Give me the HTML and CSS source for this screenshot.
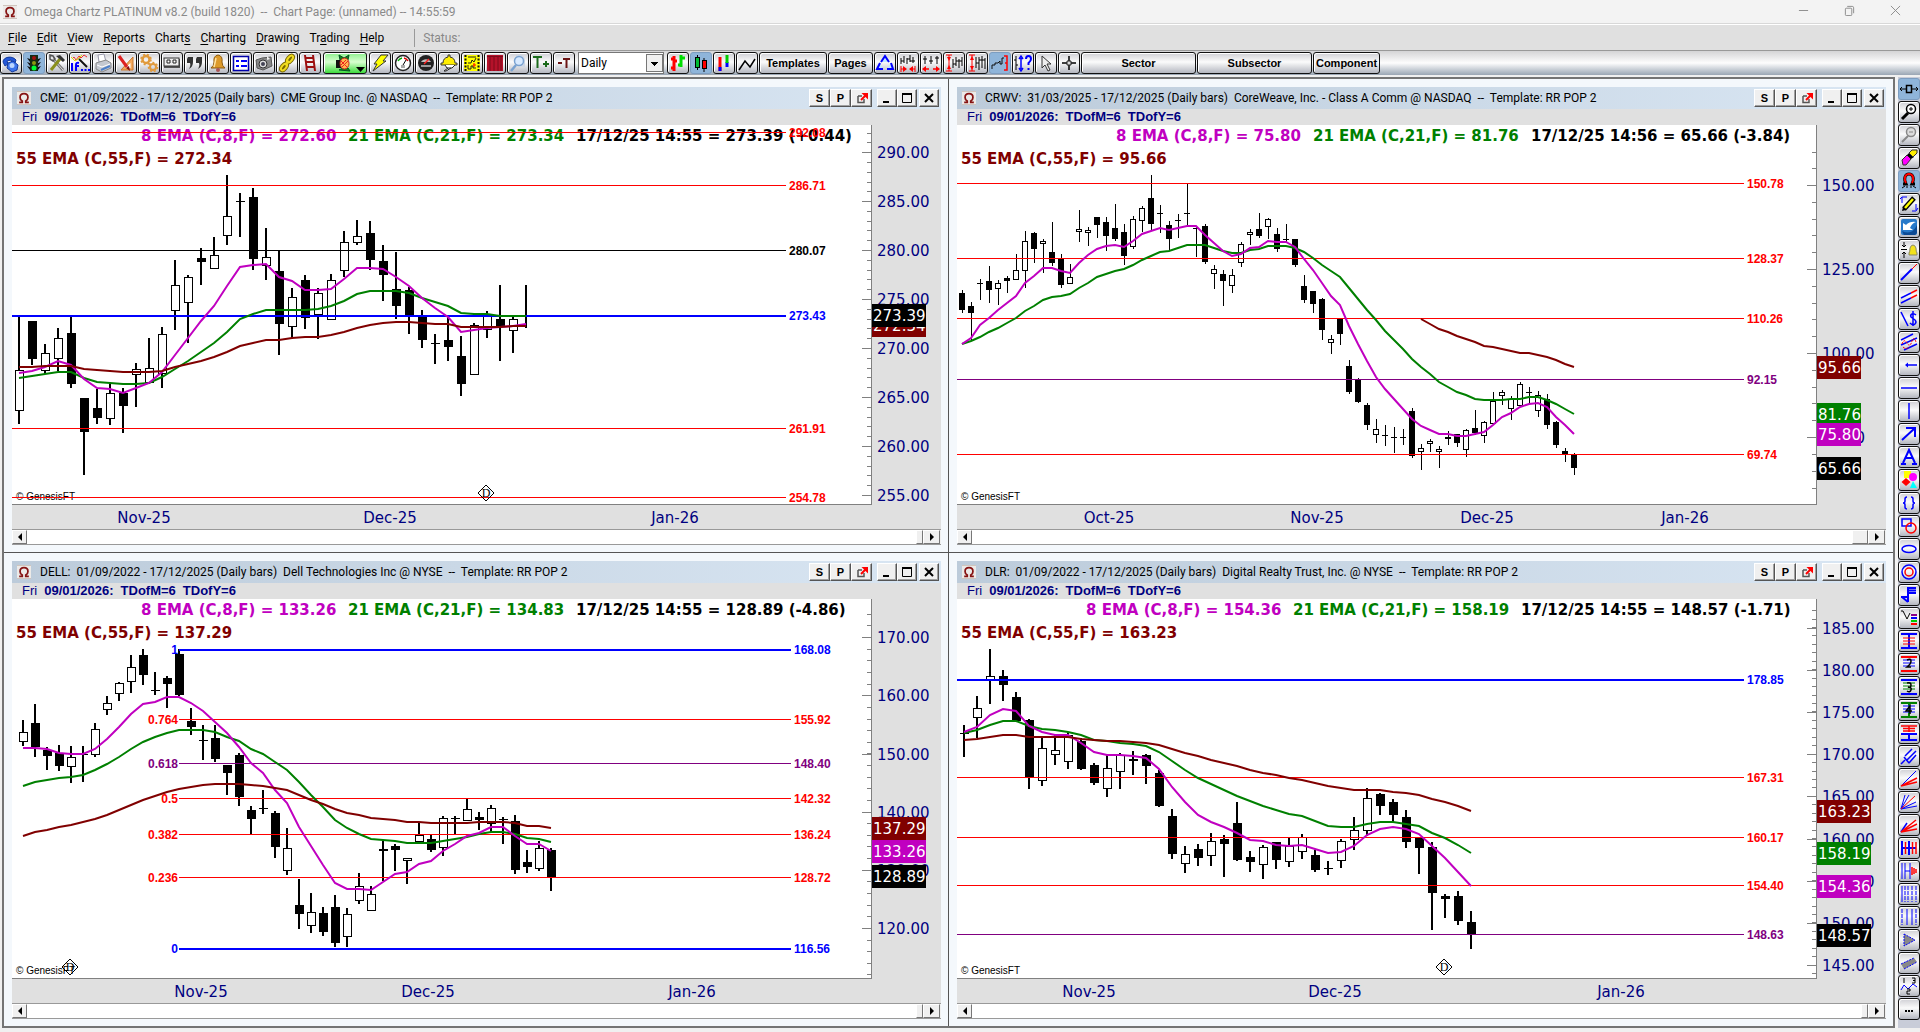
FILE: index.html
```html
<!DOCTYPE html>
<html lang="en">
<head>
<meta charset="utf-8">
<title>Omega Chartz PLATINUM</title>
<link rel="stylesheet" href="styles.css">
</head>
<body>
<svg class="defs" aria-hidden="true">
  <symbol id="omega" viewBox="0 0 16 16"><rect width="16" height="16" fill="#eceae8"/><path d="M0 .5h16M0 15.5h16" stroke="#c9bdb4"/><path d="M2.5 13h3.5v-1.500C4 10.500 3.500 9 3.500 7.300 3.500 4.500 5.400 3 8 3s4.500 1.500 4.500 4.300c0 1.700-.5 3.200-2.500 4.200V13h3.500" fill="none" stroke="#861313" stroke-width="2"/></symbol>
  <symbol id="popout" viewBox="0 0 12 12"><path d="M2 4h4M2 4v6.500h6V7" fill="none" stroke="#555" stroke-width="1.500"/><path d="M5 8l5-5" stroke="red" stroke-width="2"/><path d="M5.500 1H12v6.500z" fill="red"/></symbol>
  <symbol id="minimise" viewBox="0 0 12 12"><path d="M2 10h6" stroke="#000" stroke-width="2"/></symbol>
  <symbol id="maximise" viewBox="0 0 12 12"><path d="M1.500 2v8.500h9V2" fill="none" stroke="#000"/><path d="M1 2h10" stroke="#000" stroke-width="2"/></symbol>
  <symbol id="close" viewBox="0 0 12 12"><path d="M2 2l8 8M10 2l-8 8" stroke="#000" stroke-width="2"/></symbol>
</svg>

<header class="titlebar">
  <svg class="app-icon"><use href="#omega"/></svg>
  <h1>Omega Chartz PLATINUM v8.2 (build 1820) &nbsp;--&nbsp; Chart Page: (unnamed) -- 14:55:59</h1>
  <div class="caption">
    <button aria-label="Minimise"><svg viewBox="0 0 12 12"><path d="M1 6h10"/></svg></button>
    <button aria-label="Restore"><svg viewBox="0 0 12 12"><rect x="1.500" y="3.500" width="7" height="8" rx="1"/><path d="M3.500 1.500h5.500q1.500 0 1.500 1.500v6"/></svg></button>
    <button aria-label="Close"><svg viewBox="0 0 12 12"><path d="M1 1l10 10M11 1L1 11"/></svg></button>
  </div>
</header>

<nav class="menu">
  <a href="#file"><u>F</u>ile</a><a href="#edit"><u>E</u>dit</a><a href="#view"><u>V</u>iew</a><a href="#reports"><u>R</u>eports</a><a href="#charts">Chart<u>s</u></a><a href="#charting"><u>C</u>harting</a><a href="#drawing"><u>D</u>rawing</a><a href="#trading">Tr<u>a</u>ding</a><a href="#help"><u>H</u>elp</a>
  <span class="status">Status:</span>
</nav>

<div class="toolbar">
  <button class="tool" aria-label="Phone"><svg viewBox="0 0 20 20"><path d="M2 9c0-5 9-7 13-2l-1 3-3-1-1-2-4 1 1 3-3 2z" fill="#2458d8" stroke="#123a9c"/><path d="M7 10l5-2 5 4-1 5-5 2-5-4z" fill="#3d74ec" stroke="#123a9c"/><circle cx="11" cy="12.500" r="2.500" fill="#bcd6ff"/></svg></button>
  <button class="tool on" aria-label="Live"><svg viewBox="0 0 20 20"><path d="M7 3h6v14H7zM3 5l3 1v3zM3 9l3 1v3zM3 13l3 1v3zM17 5l-3 1v3zM17 9l-3 1v3zM17 13l-3 1v3z" fill="#111"/><path d="M6 2h8v16H6z" fill="#142b14"/><circle cx="10" cy="5" r="2" fill="#a01010"/><circle cx="10" cy="10" r="2" fill="#8a9a10"/><circle cx="10" cy="15" r="2.500" fill="#0f3"/></svg></button>
  <button class="tool" aria-label="Settings"><svg viewBox="0 0 20 20"><path d="M6 6l10 11" stroke="#777" stroke-width="3"/><path d="M6 6l10 11" stroke="#ddd"/><path d="M13 6L4 17" stroke="#8a8f1c" stroke-width="3"/><path d="M9 3l4-1 5 5-2 2z" fill="#333"/><path d="M3 2v4l3 2 2-2-2-3z" fill="none" stroke="#555" stroke-width="1.500"/></svg></button>
  <button class="tool" aria-label="Conditions"><svg viewBox="0 0 20 20"><path d="M2 6l2-2 2 3 3-4 2 2 3-3 3 2" fill="none" stroke="#e33"/><path d="M1 4l4 4 3-2 4-4" fill="none" stroke="#dd0"/><path d="M9 6l8 8" stroke="#111" stroke-width="2"/><path d="M2 10v8M6 18v-6q0-3 3-2M5 13h4M11 17h2M14.500 17h2M18 17h2" stroke="#00f" stroke-width="2" fill="none"/></svg></button>
  <button class="tool" aria-label="Print"><svg viewBox="0 0 20 20"><path d="M6 9l-1-7 6-1 2 8z" fill="#fff" stroke="#99a"/><path d="M3 10l10-3 5 3v5l-9 4-6-3z" fill="#c4c8d0" stroke="#888"/><path d="M4 12l5 2 8-3" fill="none" stroke="#fff"/><path d="M8 17l9-4" stroke="#4d7fc8" stroke-width="2"/></svg></button>
  <button class="tool" aria-label="Draw"><svg viewBox="0 0 20 20"><path d="M17 4v13H5z" fill="#f4a95c" stroke="#c8772c"/><path d="M14.500 10v5H9z" fill="#fff"/><path d="M3 3l8 11" stroke="#d22" stroke-width="3"/><path d="M10 15l4 3-1-5z" fill="#811"/></svg></button>
  <button class="tool" aria-label="Options"><svg viewBox="0 0 20 20" fill="none" stroke="#e09a3c"><circle cx="7" cy="6.500" r="3.500" stroke-width="2.500"/><circle cx="7" cy="6.500" r="5" stroke-dasharray="2 2" stroke-width="1.500"/><circle cx="14" cy="14" r="3" stroke-width="2"/><circle cx="14" cy="14" r="4.500" stroke-dasharray="2 2" stroke-width="1.500"/></svg></button>
  <button class="tool" aria-label="Tape"><svg viewBox="0 0 20 20"><rect x="2" y="6" width="16" height="9" fill="#555"/><rect x="2" y="5" width="15" height="8" fill="#eee" stroke="#333"/><path d="M5 7h3v3H5zM11 7h3v3h-3z" fill="#fff" stroke="#222"/></svg></button>
  <button class="tool" aria-label="Quotes"><svg viewBox="0 0 20 20"><path d="M3 4h5v5q0 5-4 7 2-4 1-6H2V6zM12 4h5v5q0 5-4 7 2-4 1-6h-3V6z" fill="#333"/></svg></button>
  <button class="tool" aria-label="Alerts"><svg viewBox="0 0 20 20"><path d="M10 2q5 1 4 7 0 4 3 6H3q3-2 3-6-1-6 4-7z" fill="#dd9a2a" stroke="#8c5a10"/><path d="M8 5q-1 5-2 9" stroke="#ffe2a0" stroke-width="1.500" fill="none"/><circle cx="10" cy="17" r="2" fill="#a55"/></svg></button>
  <button class="tool" aria-label="List"><svg viewBox="0 0 20 20"><path d="M2.500 3.500h15v14h-15z" fill="#fff" stroke="#00a" stroke-width="1.500"/><path d="M5 8h3M10 8h6M5 13h3M10 13h6" stroke="#00f" stroke-width="2"/></svg></button>
  <button class="tool" aria-label="Snapshot"><svg viewBox="0 0 20 20"><path d="M2 7l6-2 9-1 1 9-9 4-6-2z" fill="#888" stroke="#555"/><circle cx="9" cy="11" r="4" fill="#ddd" stroke="#333"/><circle cx="9" cy="11" r="2" fill="#445"/><path d="M13 3v4l3-1" fill="#eee"/></svg></button>
  <button class="tool" aria-label="Link"><svg viewBox="0 0 20 20" fill="none"><g stroke="#776600" stroke-width="4"><ellipse cx="13" cy="6" rx="4" ry="2" transform="rotate(-50 13 6)"/><ellipse cx="7" cy="14" rx="4" ry="2" transform="rotate(-50 7 14)"/></g><g stroke="#f0dc20" stroke-width="2"><ellipse cx="13" cy="6" rx="4" ry="2" transform="rotate(-50 13 6)"/><ellipse cx="7" cy="14" rx="4" ry="2" transform="rotate(-50 7 14)"/><path d="M8 12l4-4"/></g></svg></button>
  <button class="tool" aria-label="Ladder"><svg viewBox="0 0 20 20"><path d="M5 2l2 16M13 2l2 16M6 5h8M6 9h8M7 14h8" stroke="#9c0f0f" stroke-width="2" fill="none"/></svg></button>
  <button class="tool run" aria-label="Run"><svg viewBox="0 0 42 20"><path d="M12 7h5v8h-5z" fill="#111"/><path d="M15 2l5 3 5-3-1 5h-8zM15 17l4-2h5l2 3z" fill="#1a7d1a" stroke="#052"/><ellipse cx="20.500" cy="10.500" rx="4.500" ry="5.500" fill="#ffb84d" stroke="#c22"/><path d="M17 8l6 6M17 12l5-5M24 8l-6 6" stroke="#e22"/><path d="M32 14h9l-4.500 5z" fill="#000"/></svg></button>
  <button class="tool" aria-label="Lightning"><svg viewBox="0 0 20 20"><path d="M11 2h7l-5 6h3L3 18l4-7H4z" fill="#ff0" stroke="#333"/></svg></button>
  <button class="tool" aria-label="Gauge"><svg viewBox="0 0 20 20"><circle cx="10" cy="10" r="7.500" fill="#fff" stroke="#222" stroke-width="1.500"/><path d="M5 8a6 6 0 0 1 4-3" stroke="#0a0" stroke-width="1.500" fill="none"/><path d="M11 5a6 6 0 0 1 4 3" stroke="#d00" stroke-width="1.500" fill="none"/><path d="M10 12l3-5" stroke="#000"/><path d="M8 12h4v3H8z" fill="#aaa"/></svg></button>
  <button class="tool" aria-label="Dial"><svg viewBox="0 0 20 20"><circle cx="10" cy="10" r="8" fill="#222"/><path d="M5 9a6 6 0 0 1 10 0z" fill="#bbb"/><path d="M8 11l5-5" stroke="#f22" stroke-width="1.500"/><path d="M5 13h10" stroke="#999" stroke-width="2"/></svg></button>
  <button class="tool" aria-label="Helmet"><svg viewBox="0 0 20 20"><path d="M4 10q0-5 5-6V2h2v2q5 1 5 6h2v2H2v-2z" fill="#fe0" stroke="#333"/><path d="M6 12l2 3h5l3-3M9 15l-4 3h2l5-3" fill="#fff" stroke="#222"/></svg></button>
  <button class="tool" aria-label="Film"><svg viewBox="0 0 20 20"><rect x="2" y="2" width="16" height="16" fill="#ff0"/><path d="M3.500 2v16M16.500 2v16" stroke="#111" stroke-width="2" stroke-dasharray="2 1.500"/><path d="M6 4h8M6 10h3l1-3 2 2 2-4M6 12v4h3v-3h2v2h3" fill="none" stroke="#222"/><path d="M12 14v-4M11 12h3" stroke="red"/></svg></button>
  <button class="tool" aria-label="Curtain"><svg viewBox="0 0 20 20"><path d="M2 2h16v16H2z" fill="#b5122a"/><path d="M5 4v14M9 4v14M13 4v14M16 4v14M2 3.500h16" stroke="#7c0b1a"/></svg></button>
  <button class="tool" aria-label="Find"><svg viewBox="0 0 20 20"><path d="M8 2q8-2 9 5v7q-6 0-9-4z" fill="#ccd6e4"/><circle cx="11" cy="8" r="4.500" fill="#d8eaff" stroke="#7aa2d0" stroke-width="1.500"/><path d="M8 12l-5 6" stroke="#7aa2d0" stroke-width="2.500"/></svg></button>
  <button class="tool" aria-label="Add text"><svg viewBox="0 0 20 20"><path d="M2 4h9M6.500 4v11M12 11h6M15 8v6" stroke="#1c6b1c" stroke-width="2"/></svg></button>
  <button class="tool" aria-label="Remove text"><svg viewBox="0 0 20 20"><path d="M4 10h4M9 6h7M12.500 6v9" stroke="#6b1414" stroke-width="2"/></svg></button>
  <select class="period" aria-label="Bar period"><option>Daily</option><option>Weekly</option></select>
  <button class="tool" aria-label="Bars"><svg viewBox="0 0 20 20"><path d="M6 3v15M3 6h3M3 15h3M6 8h3" stroke="red" stroke-width="3"/><path d="M13 2v12M10 12h3M13 5h4" stroke="#0d0" stroke-width="3"/></svg></button>
  <button class="tool on" aria-label="Candles"><svg viewBox="0 0 20 20"><path d="M6.500 2v15M13 5v14" stroke="#000"/><rect x="4.500" y="4.500" width="4" height="10" fill="#0b3" stroke="#000"/><rect x="11.500" y="7.500" width="4" height="8" fill="red" stroke="#000"/></svg></button>
  <button class="tool" aria-label="Range bars"><svg viewBox="0 0 20 20"><path d="M6 4v14" stroke="red" stroke-width="3"/><path d="M6 14v4M13 9v5" stroke="#00f" stroke-width="3"/><path d="M13 2v8" stroke="#0c0" stroke-width="3"/></svg></button>
  <button class="tool" aria-label="Line"><svg viewBox="0 0 20 20"><path d="M2 17l6-9 5 6 5-8" fill="none" stroke="#000" stroke-width="1.500"/></svg></button>
  <button class="tool wide templates">Templates</button>
  <button class="tool wide pages">Pages</button>
  <button class="tool" aria-label="Recycle"><svg viewBox="0 0 20 20"><path d="M6 9l4-6 4 6M16 10l2 6h-6M8 16H2l3-6" fill="#bfe6ff" stroke="#00f" stroke-width="2"/></svg></button>
  <button class="tool" aria-label="Compress"><svg viewBox="0 0 20 20"><path d="M3 5v6M6 3v7M9 5v6M12 2v7M15 4v6M3 8h3M9 6h3M12 8h5" stroke="#000"/><path d="M3 13v6M17 13v6M3 16h5M17 16h-5" stroke="red"/><path d="M5 13l4 3-4 3zM15 13l-4 3 4 3z" fill="red"/></svg></button>
  <button class="tool" aria-label="Expand"><svg viewBox="0 0 20 20"><path d="M4 3v8M10 3v8M16 3v8M2 6h4M8 8h4M14 5h4" stroke="#000"/><path d="M5 13l-4 3 4 3zM15 13l4 3-4 3z" fill="red"/><path d="M3 16h5M17 16h-5" stroke="red" stroke-width="1.500"/></svg></button>
  <button class="tool" aria-label="Squeeze height"><svg viewBox="0 0 20 20"><path d="M9 6v9M12 4v9M15 6v9M18 4v9M9 11h3M12 8h6" stroke="#000"/><path d="M5 2v16M2 2h6M2 18h6" stroke="red"/><path d="M3 4h4l-2 4zM3 16h4l-2-4z" fill="red"/></svg></button>
  <button class="tool" aria-label="Stretch height"><svg viewBox="0 0 20 20"><path d="M9 4v11M12 4v13M15 3v12M18 5v11M9 10h3M12 7h6" stroke="#000"/><path d="M5 2v16M2 2h6M2 18h6" stroke="red"/><path d="M3 7h4l-2-4zM3 13h4l-2 4z" fill="red"/></svg></button>
  <button class="tool on" aria-label="Auto scale"><svg viewBox="0 0 20 20"><path d="M2 16v-4h3v-2h3l2-2v3h2V5h2" fill="none" stroke="#111"/><path d="M14 3h3v14h-3M15 10h2" fill="none" stroke="red" stroke-width="1.500"/></svg></button>
  <button class="tool" aria-label="Scale help"><svg viewBox="0 0 20 20"><path d="M3 3v14M1 7h2M3 12h2" stroke="#000"/><path d="M8 5v11M6 6l2-3 2 3M6 15l2 3 2-3" stroke="#00f" fill="none" stroke-width="1.500"/><path d="M13 6q0-3 2.500-3T18 6q0 2-2.500 4v2M15.500 15v2" stroke="#00f" stroke-width="2" fill="none"/></svg></button>
  <button class="tool" aria-label="Pointer"><svg viewBox="0 0 20 20"><path d="M6 3v12l3-3 3 6 2-1-3-6h4z" fill="#eee" stroke="#333"/></svg></button>
  <button class="tool" aria-label="Crosshair"><svg viewBox="0 0 20 20"><path d="M10 3v14M3 10h14" stroke="#000" stroke-width="1.500"/><path d="M8 8h4v4H8z" fill="#ddd" stroke="#222"/></svg></button>
  <button class="tool wide sector">Sector</button>
  <button class="tool wide subsector">Subsector</button>
  <button class="tool wide component">Component</button>
</div>

<main class="work">
  <div class="desk">
    <section class="window" data-chart="cme">
      <header class="wtitle"><svg class="app-icon"><use href="#omega"/></svg><h2>CME:&nbsp; 01/09/2022 - 17/12/2025 (Daily bars) &nbsp;CME Group Inc. @ NASDAQ &nbsp;--&nbsp; Template: RR POP 2</h2>
        <div class="wbtns"><button>S</button><button>P</button><button aria-label="Pop out"><svg><use href="#popout"/></svg></button><button class="frame first" aria-label="Minimise"><svg><use href="#minimise"/></svg></button><button class="frame" aria-label="Maximise"><svg><use href="#maximise"/></svg></button><button class="frame last" aria-label="Close"><svg><use href="#close"/></svg></button></div></header>
      <p class="info"><span>Fri</span><b>09/01/2026:</b><b>TDofM=6</b><b>TDofY=6</b></p>
      <svg class="chart" role="img" aria-label="CME daily candles"></svg>
      <div class="scroll"><button class="arrow left" aria-label="Scroll left"></button><span class="track"></span><span class="thumb small"></span><button class="arrow right" aria-label="Scroll right"></button></div>
    </section>
    <section class="window" data-chart="crwv">
      <header class="wtitle"><svg class="app-icon"><use href="#omega"/></svg><h2>CRWV:&nbsp; 31/03/2025 - 17/12/2025 (Daily bars) &nbsp;CoreWeave, Inc. - Class A Comm @ NASDAQ &nbsp;--&nbsp; Template: RR POP 2</h2>
        <div class="wbtns"><button>S</button><button>P</button><button aria-label="Pop out"><svg><use href="#popout"/></svg></button><button class="frame first" aria-label="Minimise"><svg><use href="#minimise"/></svg></button><button class="frame" aria-label="Maximise"><svg><use href="#maximise"/></svg></button><button class="frame last" aria-label="Close"><svg><use href="#close"/></svg></button></div></header>
      <p class="info"><span>Fri</span><b>09/01/2026:</b><b>TDofM=6</b><b>TDofY=6</b></p>
      <svg class="chart" role="img" aria-label="CRWV daily candles"></svg>
      <div class="scroll"><button class="arrow left" aria-label="Scroll left"></button><span class="track"></span><span class="thumb"></span><button class="arrow right" aria-label="Scroll right"></button></div>
    </section>
    <section class="window" data-chart="dell">
      <header class="wtitle"><svg class="app-icon"><use href="#omega"/></svg><h2>DELL:&nbsp; 01/09/2022 - 17/12/2025 (Daily bars) &nbsp;Dell Technologies Inc @ NYSE &nbsp;--&nbsp; Template: RR POP 2</h2>
        <div class="wbtns"><button>S</button><button>P</button><button aria-label="Pop out"><svg><use href="#popout"/></svg></button><button class="frame first" aria-label="Minimise"><svg><use href="#minimise"/></svg></button><button class="frame" aria-label="Maximise"><svg><use href="#maximise"/></svg></button><button class="frame last" aria-label="Close"><svg><use href="#close"/></svg></button></div></header>
      <p class="info"><span>Fri</span><b>09/01/2026:</b><b>TDofM=6</b><b>TDofY=6</b></p>
      <svg class="chart" role="img" aria-label="DELL daily candles"></svg>
      <div class="scroll"><button class="arrow left" aria-label="Scroll left"></button><span class="track"></span><span class="thumb small"></span><button class="arrow right" aria-label="Scroll right"></button></div>
    </section>
    <section class="window" data-chart="dlr">
      <header class="wtitle"><svg class="app-icon"><use href="#omega"/></svg><h2>DLR:&nbsp; 01/09/2022 - 17/12/2025 (Daily bars) &nbsp;Digital Realty Trust, Inc. @ NYSE &nbsp;--&nbsp; Template: RR POP 2</h2>
        <div class="wbtns"><button>S</button><button>P</button><button aria-label="Pop out"><svg><use href="#popout"/></svg></button><button class="frame first" aria-label="Minimise"><svg><use href="#minimise"/></svg></button><button class="frame" aria-label="Maximise"><svg><use href="#maximise"/></svg></button><button class="frame last" aria-label="Close"><svg><use href="#close"/></svg></button></div></header>
      <p class="info"><span>Fri</span><b>09/01/2026:</b><b>TDofM=6</b><b>TDofY=6</b></p>
      <svg class="chart" role="img" aria-label="DLR daily candles"></svg>
      <div class="scroll"><button class="arrow left" aria-label="Scroll left"></button><span class="track"></span><span class="thumb small"></span><button class="arrow right" aria-label="Scroll right"></button></div>
    </section>
  </div>

  <aside class="drawbar" aria-label="Drawing tools">
    <button class="tool on" aria-label="Bar width"><svg viewBox="0 0 20 20"><path d="M1 10h6M13 10h6M3 8l-2 2 2 2M17 8l2 2-2 2" fill="none" stroke="#000"/><rect x="7.500" y="6.500" width="5" height="7" fill="none" stroke="#000" stroke-width="1.500"/></svg></button>
    <button class="tool" aria-label="Zoom in"><svg viewBox="0 0 20 20"><circle cx="12" cy="7" r="4.500" fill="#fff" stroke="#000" stroke-width="1.500"/><path d="M12 5v4M10 7h4" stroke="#000"/><path d="M9 11l-6 6" stroke="#000" stroke-width="3"/></svg></button>
    <button class="tool" aria-label="Zoom out"><svg viewBox="0 0 20 20"><circle cx="12" cy="7" r="4.500" fill="#ddd" stroke="#888" stroke-width="1.500"/><path d="M10 7h4" stroke="#888"/><path d="M9 11l-6 6" stroke="#888" stroke-width="2"/></svg></button>
    <button class="tool" aria-label="Eraser"><svg viewBox="0 0 20 20"><path d="M3 12l5-5 4 4-5 6H4z" fill="#f0f" stroke="#333"/><path d="M8 7l2-2 5 4-3 2z" fill="#000"/><path d="M10 5l3-3h5v3l-4 4z" fill="#fe0" stroke="#333"/></svg></button>
    <button class="tool on" aria-label="Magnet"><svg viewBox="0 0 20 20"><path d="M4 13h3q-2-4-1-7 1-3 4-3t4 3q1 3-1 7h3" fill="none" stroke="#000" stroke-width="3"/><path d="M7 12q-2-3-1-6 1-3 4-3t4 3q1 3-1 6" fill="none" stroke="red" stroke-width="2"/><path d="M3 17l3-2M8 17v-2M12 17v-2M17 17l-3-2" stroke="#000"/></svg></button>
    <button class="tool" aria-label="Edit drawing"><svg viewBox="0 0 20 20"><path d="M5 15L15 4" stroke="#000" stroke-width="5"/><path d="M6 14l8-9" stroke="#ff0" stroke-width="2.500"/><path d="M3 17l1-4 3 3z" fill="#000"/><path d="M3 9V3M1 5l2-2h5M17 10v6M19 14l-2 3h-4" fill="none" stroke="#00f"/></svg></button>
    <button class="tool" aria-label="Undo"><svg viewBox="0 0 20 20"><rect x="2" y="2" width="16" height="16" rx="2" fill="#2779c9"/><path d="M3 14q10 5 15-6v8l-2 2H5z" fill="#0c4a94"/><path d="M4 13V6l3 2q4-4 10-3-4 1-6 6l3 2z" fill="#fff"/></svg></button>
    <button class="tool" aria-label="Price alert"><svg viewBox="0 0 20 20"><path d="M5 2v5M3 5l2 2 2-2M5 18v-6M3 14l2-2 2 2M2 9.500h6" fill="none" stroke="#000"/><path d="M10 13q1-1 1-5 1-3 3-3t3 3q0 4 1 5v2h-8z" fill="#f2e21c" stroke="#886"/></svg></button>
    <button class="tool" aria-label="Trend line"><svg viewBox="0 0 20 20"><path d="M2 17L13 6" stroke="#00f" stroke-width="2"/><path d="M13 6l5-5" stroke="red"/></svg></button>
    <button class="tool" aria-label="Parallel lines"><svg viewBox="0 0 20 20"><path d="M2 12l10-5M2 17l10-5" stroke="#00f" stroke-width="1.500"/><path d="M12 7l6-3M12 12l6-3" stroke="red" stroke-width="1.500"/></svg></button>
    <button class="tool" aria-label="Dollar line"><svg viewBox="0 0 20 20"><path d="M2 3l7 14" stroke="#00f" stroke-width="1.500"/><path d="M17 6q-2-2-4-1t-1 3l4 3q2 2 0 4t-5-1M14 2v15" fill="none" stroke="#00f" stroke-width="1.500"/></svg></button>
    <button class="tool" aria-label="Channel"><svg viewBox="0 0 20 20"><path d="M2 8l12-6M2 13l16-7M5 18l13-6" stroke="#00f" stroke-width="1.500"/><path d="M3 12q2-6 5-1t5-2q2-5 4 1M4 15q3 3 6 0" stroke="red" fill="none" stroke-dasharray="2 1"/></svg></button>
    <button class="tool" aria-label="Ray"><svg viewBox="0 0 20 20"><path d="M7 10h11" stroke="#00f" stroke-width="1.500"/><path d="M6 10l3-2.500v5z" fill="#00f"/></svg></button>
    <button class="tool" aria-label="Horizontal line"><svg viewBox="0 0 20 20"><path d="M2 10h16" stroke="#00f" stroke-width="1.500"/></svg></button>
    <button class="tool" aria-label="Vertical line"><svg viewBox="0 0 20 20"><path d="M10 2v16" stroke="#00f" stroke-width="1.500"/></svg></button>
    <button class="tool" aria-label="Arrow"><svg viewBox="0 0 20 20"><path d="M3 16L16 4M7 4h9v9" fill="none" stroke="#00f" stroke-width="2"/></svg></button>
    <button class="tool" aria-label="Text"><svg viewBox="0 0 20 20"><path d="M4 16L10 3l6 13M6 11h8M2 17h5M13 17h5" fill="none" stroke="#00f" stroke-width="2"/></svg></button>
    <button class="tool" aria-label="Shapes"><svg viewBox="0 0 20 20"><path d="M5 1h7v7H5z" fill="#ff0"/><circle cx="14" cy="7" r="4" fill="#f0f"/><path d="M7 8l4.500 4L7 16l-4.500-4z" fill="red"/><path d="M14 11l4 7h-7z" fill="#0ff"/></svg></button>
    <button class="tool" aria-label="Braces"><svg viewBox="0 0 20 20"><path d="M8 4q-2 0-2 2v2q0 2-2 2 2 0 2 2v2q0 2 2 2M12 4q2 0 2 2v2q0 2 2 2-2 0-2 2v2q0 2-2 2" fill="none" stroke="#00f" stroke-width="1.500"/></svg></button>
    <button class="tool" aria-label="Rectangle"><svg viewBox="0 0 20 20"><path d="M3 3h9v7H3z" fill="none" stroke="#00f" stroke-width="1.500"/><circle cx="12" cy="12" r="5" fill="none" stroke="red" stroke-width="1.500"/></svg></button>
    <button class="tool" aria-label="Ellipse"><svg viewBox="0 0 20 20"><ellipse cx="10" cy="10" rx="7" ry="3.500" fill="none" stroke="#00f" stroke-width="1.500"/></svg></button>
    <button class="tool" aria-label="Circles"><svg viewBox="0 0 20 20"><circle cx="10" cy="10" r="7" fill="none" stroke="#00f" stroke-width="1.500"/><circle cx="10" cy="10" r="4" fill="none" stroke="red" stroke-width="1.500"/></svg></button>
    <button class="tool" aria-label="Gann steps"><svg viewBox="0 0 20 20"><path d="M9 17V3h8M10 5.500h7M10 8h7M2 12h7M3 12l6 5" fill="none" stroke="#00f" stroke-width="2"/></svg></button>
    <button class="tool" aria-label="Volume profile"><svg viewBox="0 0 20 20"><path d="M2 3h2l4 8 3-6" fill="none" stroke="#000"/><path d="M12 7h6" stroke="#808" stroke-width="2"/><path d="M12 10h6" stroke="#00f" stroke-width="2"/><path d="M12 13h6" stroke="#0c0" stroke-width="2"/><path d="M12 16h6" stroke="red" stroke-width="2"/></svg></button>
    <button class="tool" aria-label="Retracement 1"><svg viewBox="0 0 20 20"><path d="M2 3h16M2 17h16M10 3v14" stroke="#00f" stroke-width="2"/><path d="M4 7h12M4 10h12M4 13h12" stroke="red"/></svg></button>
    <button class="tool" aria-label="Retracement 2"><svg viewBox="0 0 20 20"><path d="M2 3h16M2 17h16" stroke="red" stroke-width="2"/><path d="M4 6h12M4 9h12M4 12h12" stroke="#00f"/><path d="M8 6q4-2 4 1t-4 6h4" stroke="#000" fill="none" stroke-width="1.500"/></svg></button>
    <button class="tool" aria-label="Retracement 3"><svg viewBox="0 0 20 20"><path d="M2 3h16M2 17h16" stroke="#00f" stroke-width="2"/><path d="M4 6h12M4 9h12M4 12h12" stroke="green"/><path d="M8 6q4-1 4 2t-3 2q4 0 3 3t-4 1" stroke="#000" fill="none" stroke-width="1.500"/></svg></button>
    <button class="tool" aria-label="Retracement 4"><svg viewBox="0 0 20 20"><path d="M2 3h16M2 17h16M10 3v14" stroke="green" stroke-width="2"/><path d="M4 6h12M4 9h12M4 12h12" stroke="#00f"/><path d="M11 14V6l-4 5h6" stroke="#000" fill="none" stroke-width="1.500"/></svg></button>
    <button class="tool" aria-label="Extension"><svg viewBox="0 0 20 20"><path d="M2 3h16M4 5.500h12M4 8h12M10 3v6" stroke="red" stroke-width="1.500"/><path d="M2 11h16M2 17h16M10 11v6" stroke="#00f" stroke-width="2"/></svg></button>
    <button class="tool" aria-label="Pitchfork"><svg viewBox="0 0 20 20"><path d="M2 18l4-4M6 10l7-7M8 14l9-9M10 17l7-8M5 11l5 6" fill="none" stroke="#00f" stroke-width="1.500"/></svg></button>
    <button class="tool" aria-label="Fan 1"><svg viewBox="0 0 20 20"><path d="M2 17L17 2" stroke="#00f"/><path d="M2 17l16-8M2 17l16-4" stroke="red" stroke-width="1.500"/></svg></button>
    <button class="tool" aria-label="Fan 2"><svg viewBox="0 0 20 20"><path d="M2 17L6 3M2 17l8-14M2 17l15-7M2 17l16-3" stroke="#00f"/><path d="M2 17L16 4" stroke="red"/></svg></button>
    <button class="tool" aria-label="Fan 3"><svg viewBox="0 0 20 20"><path d="M2 17l6-9" stroke="#00f" stroke-width="1.500"/><path d="M2 17L17 5M2 17l16-8M2 17l16-3" stroke="red" stroke-width="1.500"/></svg></button>
    <button class="tool" aria-label="Cycle lines"><svg viewBox="0 0 20 20"><path d="M3 3v14M10 3v14M3 10h14" stroke="#00f" stroke-width="2"/><path d="M6.500 4v12M13.500 4v12M17 4v12" stroke="red" stroke-width="1.500"/></svg></button>
    <button class="tool" aria-label="Time zones"><svg viewBox="0 0 20 20"><path d="M3 2v16M6 2v16M11 2v16M6 10h5" stroke="#00f"/><path d="M13 6v8M15 7v6M17 8v4" stroke="red" stroke-width="1.500"/></svg></button>
    <button class="tool" aria-label="Time bands"><svg viewBox="0 0 20 20"><path d="M3 2v16" stroke="#00f"/><path d="M6 2v16M9 2v16M13 2v16M17 2v16" stroke="#00f" stroke-dasharray="4 1"/></svg></button>
    <button class="tool" aria-label="Session lines"><svg viewBox="0 0 20 20"><path d="M8 2v16M13 2v16" stroke="#00f"/><path d="M3 2v16M17 2v16" stroke="#00f" stroke-dasharray="4 1"/></svg></button>
    <button class="tool" aria-label="Triangle"><svg viewBox="0 0 20 20"><path d="M5 4l11 6-11 6z" fill="#888"/><path d="M5 4l11 6-11 6z" fill="none" stroke="#00f" stroke-dasharray="2 1"/></svg></button>
    <button class="tool" aria-label="Band"><svg viewBox="0 0 20 20"><path d="M2 11l13-6 3 4-13 7z" fill="#888"/><path d="M2 11l13-6M5 16l13-7" stroke="#00f" stroke-dasharray="2 1"/></svg></button>
    <button class="tool" aria-label="Wave count"><svg viewBox="0 0 20 20"><path d="M2 14l3-5 4 4 5-5 4 3" fill="none" stroke="#00f"/><path d="M5 2v5M13 2h3v5h-3M14 4.500h2M8 13h3v2H8v3h3" fill="none" stroke="#000"/></svg></button>
    <button class="tool" aria-label="More"><svg viewBox="0 0 20 20"><path d="M6 12h2M9 12h2M12 12h2" stroke="#000" stroke-width="2"/></svg></button>
  </aside>
</main>
<script src="charts.js"></script>
</body>
</html>
```
FILE: styles.css
```css
* { box-sizing: border-box; }

body {
  margin: 0;
  min-height: 100vh;
  display: flex;
  flex-direction: column;
  background: #f0f0f0;
  font-family: Roboto, "Segoe UI", sans-serif;
  font-size: 12px;
  color: #000;
}

h1, h2, p { margin: 0; font-size: 12px; font-weight: normal; }
button { font: inherit; padding: 0; color: inherit; }
.defs { display: none; }
.app-icon { width: 14px; height: 14px; flex: none; }

/* application title */
.titlebar {
  display: flex;
  align-items: center;
  gap: 7px;
  height: 24px;
  padding-left: 3px;
  background: #f3f3f3;
  border-bottom: 1px solid #d8d8d8;
  color: #8a8a8a;
}
.titlebar h1 { flex: 1; }
.caption { display: flex; padding-right: 2px; }
.caption button {
  width: 46px;
  height: 22px;
  border: 0;
  background: none;
}
.caption svg { width: 11px; height: 11px; fill: none; stroke: #888; }

/* menu */
.menu {
  display: flex;
  align-items: center;
  gap: 10px;
  height: 27px;
  padding-left: 8px;
  background: #e0e0e0;
  border-top: 1px solid #fff;
  border-bottom: 1px solid #999;
}
.menu a { color: #000; text-decoration: none; }
.menu u { text-underline-offset: 2px; }
.status {
  margin-left: 20px;
  padding-left: 8px;
  line-height: 18px;
  border-left: 1px solid #999;
  color: #888;
}

/* toolbars */
.toolbar {
  display: flex;
  align-items: center;
  gap: 1px;
  height: 24px;
  background: linear-gradient(#d4d4d6, #fdfdfd 50%, #9aa6b4);
}
.tool {
  flex: none;
  width: 22px;
  height: 22px;
  border: 1px solid #111;
  border-radius: 3px;
  background: linear-gradient(#cfcfd4, #fbfbfb 45%, #b4b7c0);
  box-shadow: inset 1px 1px 0 #fff;
}
.tool svg { display: block; width: 100%; height: 20px; }
.tool.on { background: #8fb5da; border-color: #7d9dc0; box-shadow: none; }
.tool.run {
  width: 44px;
  margin: 0 1px;
  background: linear-gradient(#8df08d, #d8ffd0 45%, #3ddc3d);
}
.tool.wide { font-family: "Liberation Sans", Arial, sans-serif; font-weight: bold; font-size: 11px; }
.templates { width: 68px; }
.pages { width: 45px; }
.sector { width: 115px; }
.subsector { width: 115px; }
.component { width: 67px; }
.period {
  width: 86px;
  height: 22px;
  margin: 0 2px;
  padding-left: 2px;
  border: 1px solid #777;
  border-radius: 0;
  appearance: none;
  font: inherit;
  color: #000;
  background:
    linear-gradient(#000, #000) right 5px top 9px / 7px 1px no-repeat,
    linear-gradient(#000, #000) right 6px top 10px / 5px 1px no-repeat,
    linear-gradient(#000, #000) right 7px top 11px / 3px 1px no-repeat,
    linear-gradient(#000, #000) right 8px top 12px / 1px 1px no-repeat,
    linear-gradient(#f0f0f0, #f0f0f0) right 1px top 2px / 15px 16px no-repeat,
    linear-gradient(#777, #777) right 0 top 1px / 17px 18px no-repeat,
    #fff;
}

/* workspace */
.work { flex: 1; display: flex; padding: 2px 0 4px 2px; }
.desk {
  flex: 1;
  display: grid;
  grid-template-columns: 1fr 1fr;
  grid-template-rows: 1fr 1fr;
  gap: 1px;
  border: 2px solid #747474;
  background: #555;
}
.drawbar {
  flex: none;
  width: 25px;
  display: flex;
  flex-direction: column;
  gap: 1px;
  padding: 1px 0 0 3px;
  background: linear-gradient(90deg, #f4f4f4 3px, #c8ccd8 3px);
}

/* chart windows */
.window {
  display: flex;
  flex-direction: column;
  min-width: 0;
  min-height: 300px;
  padding: 8px 7px 7px 8px;
  background: #f4f8fc;
}
.wtitle {
  display: flex;
  align-items: center;
  gap: 9px;
  height: 22px;
  padding: 0 2px 0 5px;
  background: linear-gradient(90deg, #bccbda, #d9e6f3);
}
.wtitle h2 { flex: 1; white-space: nowrap; overflow: hidden; }
.wbtns { display: flex; }
.wbtns button {
  display: grid;
  place-items: center;
  width: 21px;
  height: 18px;
  border: 1px solid;
  border-color: #fff #555 #555 #fff;
  background: #f0f0f0;
  box-shadow: inset -1px -1px 0 #a0a0a0;
  font-family: "Liberation Sans", Arial, sans-serif;
  font-size: 11px;
  font-weight: bold;
}
.wbtns svg { width: 12px; height: 12px; }
.wbtns .frame { width: 20px; }
.wbtns .first { margin-left: 5px; }
.wbtns .last { margin-left: 2px; }
.info {
  display: flex;
  gap: 7px;
  height: 16px;
  padding-left: 10px;
  font-size: 13px;
  line-height: 16px;
  background: #e0e0e0;
  color: #000080;
  font-family: "Liberation Sans", Arial, sans-serif;
}
.chart {
  flex: 1;
  display: block;
  width: 100%;
  height: 0;
  background: #e0e0e0;
  font-family: "DejaVu Sans", Verdana, sans-serif;
  font-size: 15px;
}
.legend { font-weight: bold; }
.level { font-family: "Liberation Sans", Arial, sans-serif; font-size: 12px; font-weight: bold; }
.credit { font-family: "Liberation Sans", Arial, sans-serif; font-size: 10px; }
.dividend { font-family: "Liberation Serif", serif; font-size: 12px; }
.axis { fill: #000080; }
.tag { fill: #fff; }

/* scrollbars */
.scroll {
  display: flex;
  height: 16px;
  padding-right: 1px;
  border: 1px solid #999;
  border-width: 1px 0;
  background: #f0f0f0;
}
.track { flex: 1; background: #fff; }
.arrow, .thumb {
  width: 16px;
  border: 1px solid;
  border-color: #fff #777 #777 #fff;
  background: #f0f0f0;
}
.thumb.small { width: 7px; }
.arrow { display: grid; place-items: center; width: 17px; }
.arrow.left { width: 15px; }
.arrow::before { content: ""; border: 4px solid transparent; border-left: 4px solid #000; border-right: 0; }
.arrow.left::before { border-left: 0; border-right: 4px solid #000; }
```
FILE: charts.js
```js
// All chart geometry is in grid units, three to a pixel at the base plot size.
const BASE_W = 860, BASE_H = 379, AXIS_W = 69, AXIS_H = 25;
const RED = '#ff0000', BLUE = '#0000ff', PURPLE = '#800080';
const MAGENTA = '#c000c0', GREEN = '#008000', MAROON = '#800000';

// candles: high, low, body top, body bottom, 1 = filled / 0 = hollow
const charts = {
  cme: {
    ox: 36, oy: 45, x0: 57, step: 39, half: 4, wick: 2,
    legend: [[425, '8 EMA (C,8,F) = 272.60', MAGENTA], [1046, '21 EMA (C,21,F) = 273.34', GREEN], [1728, '17/12/25 14:55 = 273.39 (+0.44)', '#000']],
    legend2: '55 EMA (C,55,F) = 272.34',
    levels: [[68, '292.08', RED], [227, '286.71', RED], [421, '280.07', '#000'], [615, '273.43', BLUE, 2], [955, '261.91', RED], [1162, '254.78', RED]],
    levelEnd: 2358, levelText: 2368,
    axis: { first: 128, step: 147, labels: ['290.00', '285.00', '280.00', '275.00', '270.00', '265.00', '260.00', '255.00'], from: 69 },
    tags: [[612, '272.34', MAROON], [582, '273.39', '#000']],
    months: [[432, 'Nov-25'], [1172, 'Dec-25'], [2027, 'Jan-26']],
    dividend: [1459, 1150],
    candles: [[617,942,781,901,0],[633,765,633,749,1],[702,793,730,781,0],[654,783,685,745,0],[618,836,669,824,1],[864,1095,864,966,1],[838,942,894,926,1],[820,945,850,925,0],[834,969,851,890,1],[759,891,778,793,0],[684,822,775,817,0],[652,834,673,790,0],[450,660,526,601,0],[495,699,502,577,0],[414,525,444,458,1],[381,476,436,475,0],[195,405,319,376,0],[249,381,273,274,1],[234,480,261,449,1],[354,510,442,466,0],[422,735,483,644,1],[534,685,562,649,0],[495,657,510,626,1],[534,687,550,614,0],[492,628,511,628,0],[363,502,397,481,0],[330,405,379,397,0],[333,480,369,452,1],[405,573,453,497,1],[426,627,537,590,1],[533,672,541,623,1],[600,714,617,692,1],[672,762,701,703,1],[620,753,690,713,1],[678,858,738,824,1],[640,797,647,793,0],[603,684,617,658,0],[525,753,627,648,1],[617,729,629,661,0],[525,654,618,619,1]],
    lines: [
      [GREEN, 0, [804,799,793,786,786,804,815,818,822,822,818,802,778,754,727,700,665,627,612,600,600,600,600,596,589,572,553,543,543,543,549,565,577,588,610,611,613,618,619,619]],
      [MAGENTA, 0, [790,783,770,752,765,808,835,837,850,835,820,787,735,683,634,587,528,472,466,461,502,514,539,540,536,507,475,474,478,502,528,565,595,622,665,661,655,651,648,642]],
      [MAROON, 0, [771,771,769,768,769,776,780,784,786,786,786,784,772,763,754,742,727,709,700,691,689,684,682,680,674,665,653,646,640,636,636,639,641,642,650,651,650,650,649,648]]]
  },
  crwv: {
    ox: 21, oy: 45, x0: 36, step: 27, half: 3, wick: 1,
    legend: [[499, '8 EMA (C,8,F) = 75.80', MAGENTA], [1090, '21 EMA (C,21,F) = 81.76', GREEN], [1743, '17/12/25 14:56 = 65.66 (-3.84)', '#000']],
    legend2: '55 EMA (C,55,F) = 95.66',
    levels: [[220, '150.78', RED], [445, '128.37', RED], [625, '110.26', RED], [808, '92.15', PURPLE], [1033, '69.74', RED]],
    levelEnd: 2382, levelText: 2392,
    axis: { first: 227, step: 252, labels: ['150.00', '125.00', '100.00', '75.00'], from: 126 },
    tags: [[738, '95.66', MAROON], [879, '81.76', GREEN], [939, '75.80', MAGENTA], [1041, '65.66', '#000']],
    months: [[479, 'Oct-25'], [1101, 'Nov-25'], [1613, 'Dec-25'], [2205, 'Jan-26']],
    candles: [[540,609,549,602,1],[576,690,588,611,1],[507,570,519,523,1],[468,579,513,542,1],[510,585,520,535,0],[498,549,504,515,1],[432,510,481,508,0],[363,534,394,481,0],[366,459,369,419,1],[389,489,394,401,0],[336,470,426,461,1],[432,534,445,527,1],[462,524,502,520,0],[300,396,358,364,0],[351,408,360,367,0],[321,384,321,347,1],[321,423,336,380,1],[282,393,354,389,1],[342,465,366,440,1],[318,417,328,409,0],[288,366,295,331,0],[195,360,264,344,1],[285,369,309,311,1],[333,420,345,389,1],[312,384,330,334,1],[221,345,309,314,1],[348,441,355,358,1],[342,462,348,458,1],[465,537,478,490,0],[480,588,492,515,1],[477,549,496,526,0],[396,471,403,458,0],[357,405,366,373,0],[309,384,357,380,1],[324,387,328,349,0],[354,426,372,419,1],[342,400,387,391,1],[387,471,387,467,1],[495,579,528,572,1],[543,609,543,584,1],[564,690,567,662,1],[675,732,688,697,0],[626,705,626,674,1],[750,852,768,848,1],[804,879,808,878,1],[879,960,885,947,1],[927,999,958,973,0],[945,1008,975,977,1],[951,1029,981,985,1],[957,1005,981,983,1],[894,1044,903,1040,1],[1002,1080,1015,1024,0],[987,1026,995,1000,0],[1008,1074,1018,1024,0],[963,1005,982,988,1],[972,1011,972,1001,1],[957,1041,962,1018,0],[900,975,954,971,1],[933,999,937,976,0],[846,945,875,940,0],[840,885,848,856,0],[858,930,868,895,0],[816,888,823,886,0],[831,880,847,851,1],[843,921,857,901,0],[852,957,868,947,1],[933,1014,936,1007,1],[1014,1056,1023,1037,1],[1030,1095,1034,1076,1]],
    lines: [
      [GREEN, 0, [702,694,680,667,655,640,625,604,588,570,561,559,552,535,519,502,493,484,478,466,451,438,426,424,415,405,405,405,415,424,428,428,421,418,409,408,408,414,427,443,464,484,500,533,566,599,631,662,691,718,748,772,791,815,831,846,856,867,870,870,870,867,867,862,860,869,883,897,912]],
      [MAGENTA, 0, [702,684,645,624,600,579,557,520,497,474,474,482,490,459,436,418,409,404,411,393,373,364,353,359,355,348,349,374,398,422,438,432,415,410,392,396,396,411,446,480,519,557,585,647,701,752,800,837,868,896,926,948,960,971,973,978,978,973,967,945,921,908,890,882,878,892,920,945,972]],
      [MAROON, 51, [628,641,656,667,677,688,697,707,712,718,722,728,730,736,742,751,762,772]]]
  },
  dell: {
    ox: 36, oy: 147, x0: 69, step: 36, half: 4, wick: 2,
    legend: [[425, '8 EMA (C,8,F) = 133.26', MAGENTA], [1046, '21 EMA (C,21,F) = 134.83', GREEN], [1728, '17/12/25 14:55 = 128.89 (-4.86)', '#000']],
    legend2: '55 EMA (C,55,F) = 137.29',
    levels: [[297, '168.08', BLUE, 2, '1'], [508, '155.92', RED, 1, '0.764'], [640, '148.40', PURPLE, 1, '0.618'], [745, '142.32', RED, 1, '0.5'], [853, '136.24', RED, 1, '0.382'], [982, '128.72', RED, 1, '0.236'], [1194, '116.56', BLUE, 2, '0']],
    levelStart: 537, levelEnd: 2373, levelText: 2384,
    axis: { first: 263, step: 174.5, labels: ['170.00', '160.00', '150.00', '140.00', '130.00', '120.00'], from: 193 },
    tags: [[801, '137.29', MAROON], [870, '133.26', MAGENTA], [945, '128.89', '#000']],
    months: [[603, 'Nov-25'], [1286, 'Dec-25'], [2076, 'Jan-26']],
    dividend: [212, 1252],
    candles: [[510,588,547,574,0],[462,621,519,592,1],[591,660,602,620,1],[585,663,609,650,1],[588,699,622,649,0],[588,696,612,613,1],[519,621,538,613,0],[438,495,460,478,0],[396,453,400,430,0],[315,429,352,394,0],[297,405,315,377,1],[366,435,420,422,1],[378,474,384,404,1],[297,440,312,437,1],[474,555,515,533,1],[525,630,571,574,1],[525,636,564,627,1],[645,735,645,671,1],[609,768,615,741,1],[768,852,780,809,1],[720,792,774,776,1],[783,924,789,893,1],[834,975,895,961,0],[987,1137,1065,1094,1],[1029,1149,1087,1126,0],[1071,1158,1089,1148,1],[1035,1192,1071,1181,1],[1074,1192,1093,1159,0],[969,1062,1009,1051,0],[1010,1083,1033,1081,0],[873,993,897,905,1],[882,963,888,902,1],[924,1002,925,931,0],[816,876,856,874,0],[855,906,867,900,1],[798,918,805,891,0],[798,852,804,806,1],[745,815,778,811,0],[786,840,801,812,1],[765,846,775,820,0],[801,882,807,811,1],[795,972,813,962,1],[900,969,936,953,1],[873,963,895,955,0],[894,1023,900,982,1]],
    lines: [
      [GREEN, 0, [708,697,691,685,680,674,661,643,622,598,577,562,548,539,539,541,547,560,573,597,612,637,661,697,734,770,810,834,852,868,871,874,878,878,878,872,866,860,853,847,846,853,863,866,876]],
      [MAGENTA, 0, [594,594,597,610,612,612,597,567,531,491,463,455,441,441,460,484,516,549,590,639,669,719,760,831,887,944,999,1017,1018,1020,995,973,965,941,932,902,881,859,850,831,831,858,881,881,903]],
      [MAROON, 0, [858,847,841,832,826,817,807,796,781,766,751,739,727,718,712,706,703,702,703,706,709,714,721,736,749,763,778,790,796,804,808,811,815,816,818,818,818,818,816,816,816,820,827,829,834]]]
  },
  dlr: {
    ox: 21, oy: 147, x0: 42, step: 39, half: 4, wick: 2,
    legend: [[410, '8 EMA (C,8,F) = 154.36', MAGENTA], [1030, '21 EMA (C,21,F) = 158.19', GREEN], [1713, '17/12/25 14:55 = 148.57 (-1.71)', '#000']],
    legend2: '55 EMA (C,55,F) = 163.23',
    levels: [[387, '178.85', BLUE, 2], [682, '167.31', RED], [862, '160.17', RED], [1006, '154.40', RED], [1153, '148.63', PURPLE]],
    levelEnd: 2382, levelText: 2392,
    axis: { first: 234, step: 126.6, labels: ['185.00', '180.00', '175.00', '170.00', '165.00', '160.00', '155.00', '150.00', '145.00'], from: 182 },
    tags: [[750, '163.23', MAROON], [876, '158.19', GREEN], [975, '154.36', MAGENTA], [1122, '148.57', '#000']],
    months: [[417, 'Nov-25'], [1157, 'Dec-25'], [2013, 'Jan-26']],
    dividend: [1484, 1252],
    candles: [[525,621,549,553,1],[438,564,475,502,0],[297,462,379,388,0],[360,453,378,407,1],[426,518,441,514,1],[507,717,510,686,1],[558,708,595,691,0],[555,645,601,613,0],[548,657,556,634,0],[565,660,575,657,1],[639,705,645,701,1],[615,741,655,715,0],[609,717,616,664,0],[603,675,627,635,1],[612,702,615,650,1],[662,771,671,768,1],[777,927,798,914,1],[888,969,913,940,0],[882,948,897,926,1],[849,948,874,916,0],[855,981,867,884,1],[756,933,819,930,1],[903,966,921,938,1],[885,987,892,943,0],[876,957,876,932,1],[864,951,888,934,0],[852,927,862,905,0],[900,966,915,960,1],[933,975,954,956,1],[867,954,874,931,0],[801,900,841,867,0],[714,858,745,841,0],[729,795,732,770,1],[747,820,756,797,1],[780,894,801,878,1],[864,972,866,896,1],[876,1140,891,1029,1],[1032,1104,1038,1047,1],[1023,1125,1038,1113,1],[1083,1197,1116,1157,1]],
    lines: [
      [GREEN, 0, [548,541,526,514,513,529,537,541,545,554,570,574,580,583,588,607,633,659,683,702,719,737,754,767,781,793,799,814,827,830,830,822,817,816,822,829,848,865,886,909]],
      [MAGENTA, 0, [546,530,496,476,484,527,545,554,556,580,606,615,615,619,625,657,712,755,796,815,830,850,871,874,886,888,884,897,909,905,888,856,838,830,836,853,889,925,966,1009]],
      [MAROON, 0, [571,568,562,555,556,560,561,562,562,566,571,573,574,577,580,586,598,609,619,629,639,649,659,668,676,685,691,699,709,715,720,720,721,725,730,735,747,757,769,783]]]
  }
};

function add(svg, name, attrs, text) {
  const node = document.createElementNS('http://www.w3.org/2000/svg', name);
  for (const key in attrs) node.setAttribute(key, attrs[key]);
  if (text !== undefined) node.textContent = text;
  svg.appendChild(node);
  return node;
}

function draw(svg, c) {
  svg.replaceChildren();
  const box = svg.getBoundingClientRect();
  const plotW = Math.round(box.width) - AXIS_W, plotH = Math.round(box.height) - AXIS_H;
  const X = u => Math.floor((u - c.ox) / 3 * plotW / BASE_W);
  const Y = v => Math.floor((v - c.oy) / 3 * plotH / BASE_H);
  const rect = (x, y, w, h, fill, extra) => add(svg, 'rect', { x, y, width: w, height: h, fill, ...extra });

  rect(0, 0, plotW, plotH, '#fff');
  add(svg, 'text', { x: 4, y: plotH - 4, class: 'credit' }, '© GenesisFT');

  for (const [x, text, fill] of c.legend) add(svg, 'text', { x: X(x), y: 16, fill, class: 'legend' }, text);
  add(svg, 'text', { x: 4, y: 39, fill: MAROON, class: 'legend' }, c.legend2);

  c.levels.forEach(l => {
    if (l[4]) add(svg, 'text', { x: X(c.levelStart) - 1, y: Y(l[0]) + 5, fill: l[2], class: 'level', 'text-anchor': 'end' }, l[4]);
  });

  c.candles.forEach(([hi, lo, top, bottom, filled], i) => {
    const x = X(c.x0 + i * c.step), y = Y(top), h = Math.max(1, Y(bottom) - y), w = c.half * 2 + (c.wick === 2 ? 1 : 0);
    rect(x - (c.wick - 1), Y(hi), c.wick, Y(lo) - Y(hi), '#000');
    if (filled) rect(x - c.half, y, w, h, '#000');
    else rect(x - c.half + 0.5, y + 0.5, w - 1, h, '#fff', { stroke: '#000' });
  });

  for (const [y, text, color, width = 1] of c.levels) {
    const start = c.levelStart ? X(c.levelStart) : 0;
    rect(start, Y(y), X(c.levelEnd) - start, width, color);
    add(svg, 'text', { x: X(c.levelText), y: Y(y) + 5, fill: color, class: 'level' }, text);
  }

  for (const [stroke, from, ys] of c.lines) {
    const points = ys.map((y, i) => `${X(c.x0 + (i + from) * c.step)},${Y(y + 1)}`).join(' ');
    add(svg, 'polyline', { points, fill: 'none', stroke, 'stroke-width': 2 });
  }

  if (c.dividend) {
    const x = X(c.dividend[0]), y = Y(c.dividend[1]);
    add(svg, 'path', { d: `M${x} ${y - 8}l8 8-8 8-8-8z`, fill: 'none', stroke: '#000' });
    add(svg, 'text', { x, y: y + 4, class: 'dividend', 'text-anchor': 'middle' }, 'D');
  }

  // price axis
  rect(plotW - 1, 0, 1, plotH, '#808080');
  rect(0, plotH, plotW, 1, '#808080');
  for (let v = c.axis.from; v < c.oy + BASE_H * 3; v += c.axis.step / 5) rect(plotW - 5, Y(v), 4, 1, '#808080');
  c.axis.labels.forEach((label, i) => {
    const y = Y(c.axis.first + i * c.axis.step);
    rect(plotW - 10, y, 9, 1, '#808080');
    add(svg, 'text', { x: plotW + 5, y: y + 6, class: 'axis' }, label);
  });
  for (const [y, text, fill] of c.tags) {
    const plate = rect(plotW, Y(y), 0, 23, fill);
    const label = add(svg, 'text', { x: plotW + 1, y: Y(y) + 17, class: 'tag' }, text);
    plate.setAttribute('width', Math.ceil(label.getComputedTextLength()) + 1);
  }
  for (const [x, text] of c.months) add(svg, 'text', { x: X(x), y: plotH + 19, class: 'axis', 'text-anchor': 'middle' }, text);
}

function drawAll() {
  document.querySelectorAll('.window').forEach(w => draw(w.querySelector('.chart'), charts[w.dataset.chart]));
}
drawAll();
addEventListener('resize', drawAll);
```
